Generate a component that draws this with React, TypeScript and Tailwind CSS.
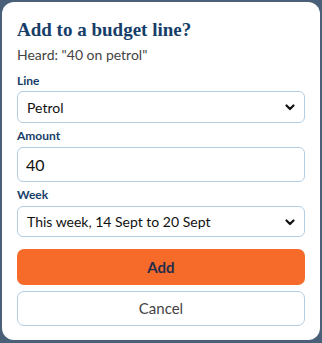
import React from "react";

const Chevron = () => (
  <svg width="12" height="12" viewBox="0 0 12 12" className="pointer-events-none absolute right-[9px] top-1/2 -translate-y-1/2">
    <path d="M2.5 4.5 L6 8 L9.5 4.5" fill="none" stroke="#111" strokeWidth="2.2" strokeLinecap="round" strokeLinejoin="round" />
  </svg>
);

export default function App() {
  return (
    <div className="h-[343px] w-[322px] bg-[#4a6079] p-[2px]" style={{ fontFamily: "Lato, 'Noto Sans', sans-serif" }}>
      <div className="flex h-[338px] w-[318px] flex-col rounded-[12px] bg-white px-[15px] pt-[16px]">
        <h1 className="h-[24px] text-[19px] font-bold leading-[24px] text-[#163e68]" style={{ fontFamily: "'Liberation Serif', serif" }}>
          Add to a budget line?
        </h1>
        <p className="mt-[3px] text-[14px] leading-[20px] text-[#444]">Heard: "40 on petrol"</p>
        <label className="mt-[8px] text-[12px] font-bold leading-[16px] text-[#163e68]">Line</label>
        <div className="relative mt-[2px]">
          <select className="h-[32px] w-full appearance-none rounded-[6px] border border-[#b3cde3] bg-white pl-[9px] text-[14px] text-[#111] outline-none">
            <option>Petrol</option>
          </select>
          <Chevron />
        </div>
        <label className="mt-[5px] text-[12px] font-bold leading-[16px] text-[#163e68]">Amount</label>
        <input
          className="mt-[3px] h-[35px] w-full rounded-[6px] border border-[#b3cde3] bg-white pl-[8px] text-[16px] text-[#111] outline-none"
          defaultValue="40"
        />
        <label className="mt-[5px] text-[12px] font-bold leading-[16px] text-[#163e68]">Week</label>
        <div className="relative mt-[3px]">
          <select className="h-[31px] w-full appearance-none rounded-[6px] border border-[#b3cde3] bg-white pl-[9px] text-[14px] text-[#111] outline-none">
            <option>This week, 14 Sept to 20 Sept</option>
          </select>
          <Chevron />
        </div>
        <button className="mt-[12px] h-[36px] w-full rounded-[7px] bg-[#f66b2a] text-[15px] font-bold text-[#1f2d4a]">Add</button>
        <button className="mt-[6px] h-[35px] w-full rounded-[7px] border border-[#b3cde3] bg-white text-[15px] text-[#444]">Cancel</button>
      </div>
    </div>
  );
}
